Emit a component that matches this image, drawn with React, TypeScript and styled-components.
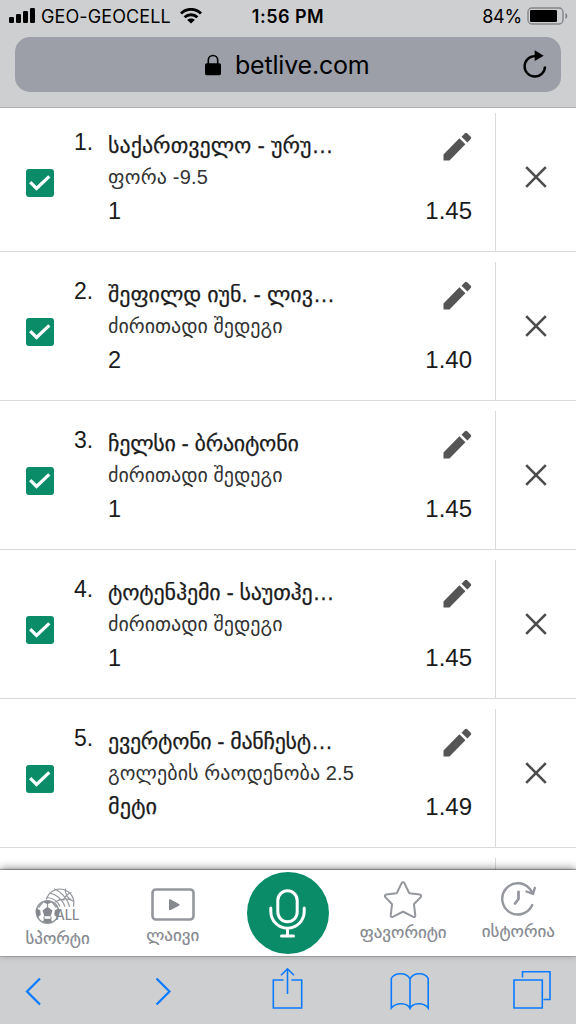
import React from "react";
import styled, { createGlobalStyle } from "styled-components";

const GlobalStyle = createGlobalStyle`
  * { box-sizing: border-box; }
  body { margin: 0; background: #fff; font-family: "Liberation Sans", "DejaVu Sans", sans-serif; }
  svg { display: block; flex: none; }
`;

const Screen = styled.div`
  width: 576px;
  height: 1024px;
  display: flex;
  flex-direction: column;
  overflow: hidden;
  color: #1b1b1b;
`;

const BrowserHeader = styled.header`
  height: 108px;
  flex: none;
  background: #cecfd1;
  border-bottom: 1px solid #b0b0b2;
  padding: 0 15px;
  color: #000;
`;

const StatusBar = styled.div`
  height: 37px;
  margin: 0 -6px;
  padding-bottom: 5px;
  display: grid;
  grid-template-columns: 1fr auto 1fr;
  align-items: center;
  font-family: Inter, sans-serif;
  font-size: 18px;
`;

const StatusGroup = styled.div<{ $end?: boolean }>`
  display: flex;
  align-items: center;
  gap: ${(p) => (p.$end ? 5 : 6)}px;
  justify-content: ${(p) => (p.$end ? "flex-end" : "flex-start")};
  margin-right: ${(p) => (p.$end ? -1 : 0)}px;
`;

const StatusText = styled.span<{ $spacing?: number; $bold?: boolean }>`
  letter-spacing: ${(p) => p.$spacing ?? 0}px;
  font-weight: ${(p) => (p.$bold ? 600 : 400)};
  white-space: nowrap;
`;

const WifiSlot = styled.div`
  margin-left: 3px;
`;

const AddressBar = styled.div`
  width: 546px;
  height: 55px;
  border-radius: 15px;
  background: #9c9ea8;
  display: flex;
  align-items: center;
  padding: 0 14px 0 190px;
`;

const Host = styled.span`
  margin-left: 14px;
  font-family: Inter, sans-serif;
  font-size: 25px;
  letter-spacing: -0.2px;
  flex: 1;
`;

const BetList = styled.main`
  flex: 1;
  min-height: 0;
  overflow: hidden;
`;

const BetRow = styled.article`
  height: 149px;
  padding-top: 10px;
  display: flex;
  border-bottom: 1px solid #dadada;
  &:first-child { height: 144px; padding-top: 5px; }
`;

const CheckCell = styled.div`
  width: 74px;
  padding: 56px 0 0 26px;
`;

const CheckBox = styled.div`
  width: 28px;
  height: 28px;
  border-radius: 3px;
  background: #0b8c69;
  display: grid;
  place-items: center;
`;

const Index = styled.div`
  width: 34px;
  padding-top: 16px;
  font-size: 23px;
  line-height: 26px;
`;

const BetInfo = styled.div`
  width: 260px;
  padding-top: 17px;
  white-space: nowrap;
`;

const Title = styled.div<{ $spacing: number }>`
  height: 32px;
  line-height: 31px;
  font-size: 22px;
  letter-spacing: ${(p) => p.$spacing}px;
  -webkit-text-stroke: 0.25px #1b1b1b;
`;

const Market = styled.div<{ $spacing: number }>`
  height: 30px;
  line-height: 30px;
  font-size: 20px;
  color: #333;
  letter-spacing: ${(p) => p.$spacing}px;
`;

const Pick = styled.div<{ $word: boolean }>`
  height: 38px;
  line-height: ${(p) => (p.$word ? 37 : 38)}px;
  font-size: ${(p) => (p.$word ? 22.3 : 23.5)}px;
  -webkit-text-stroke: ${(p) => (p.$word ? "0.25px #1b1b1b" : "0")};
`;

const OddsCell = styled.div`
  flex: 1;
  padding: 19px 23px 0 0;
  display: flex;
  flex-direction: column;
  align-items: flex-end;
`;

const Odds = styled.div`
  margin-top: 37px;
  font-size: 24px;
  line-height: 26px;
`;

const RemoveCell = styled.div`
  width: 81px;
  border-left: 1px solid #dadada;
  padding: 53px 0 0 29px;
`;

const BottomNav = styled.nav`
  position: relative;
  height: 86px;
  flex: none;
  background: #fff;
  box-shadow: 0 -1px 1px rgba(0, 0, 0, 0.3), 0 -2px 8px rgba(0, 0, 0, 0.42);
  display: grid;
  grid-template-columns: repeat(5, 115.2px);
  color: #85888f;
`;

const NavItem = styled.div<{ $top: number }>`
  padding-top: ${(p) => p.$top}px;
  display: flex;
  flex-direction: column;
  align-items: center;
`;

const NavLabel = styled.span`
  font-size: 17px;
  line-height: 22px;
  margin-top: 4px;
  white-space: nowrap;
  -webkit-text-stroke: 0.2px #85888f;
`;

const MicButton = styled.div`
  width: 82px;
  height: 82px;
  border-radius: 50%;
  background: #0b8c69;
  display: grid;
  place-items: center;
`;

const Toolbar = styled.footer`
  height: 68px;
  flex: none;
  background: #cecfd1;
  border-top: 1px solid #b0b0b2;
  padding: 10px 0 0 25px;
  display: grid;
  grid-template-columns: 130px 117px 118px 123px auto;
`;

const bets = [
  { title: "საქართველო - ურუ…", ts: 0, market: "ფორა -9.5", ms: 0.2, pick: "1", odds: "1.45" },
  { title: "შეფილდ იუნ. - ლივ…", ts: -0.05, market: "ძირითადი შედეგი", ms: 0, pick: "2", odds: "1.40" },
  { title: "ჩელსი - ბრაიტონი", ts: -0.25, market: "ძირითადი შედეგი", ms: 0, pick: "1", odds: "1.45" },
  { title: "ტოტენჰემი - საუთჰე…", ts: -0.17, market: "ძირითადი შედეგი", ms: 0, pick: "1", odds: "1.45" },
  { title: "ევერტონი - მანჩესტ…", ts: -0.28, market: "გოლების რაოდენობა 2.5", ms: 0.1, pick: "მეტი", odds: "1.49" },
];

const SignalIcon = () => (
  <svg width="26" height="16" viewBox="0 0 26 16">
    <rect x="0" y="9" width="5" height="6" rx="1.3" />
    <rect x="7" y="6" width="5" height="9" rx="1.3" />
    <rect x="14" y="3" width="5" height="12" rx="1.3" />
    <rect x="21" y="0" width="5" height="15" rx="1.3" />
  </svg>
);

const WifiIcon = () => (
  <svg width="22" height="16" viewBox="0 0 22 16" fill="none" stroke="#000" strokeWidth="2.9">
    <path d="M1 5.5C6.7 0 15.3 0 21 5.5" />
    <path d="M4.6 9.3c3.7-3.5 9.1-3.5 12.8 0" />
    <path d="M11 15.5 7.2 11.9c2.1-1.9 5.5-1.9 7.6 0z" fill="#000" stroke="none" />
  </svg>
);

const BatteryIcon = () => (
  <svg width="41" height="18" viewBox="0 0 41 18">
    <rect x="1" y="1" width="35" height="16" rx="4" fill="none" stroke="#85868a" strokeWidth="1.4" />
    <rect x="3" y="3" width="27" height="12" rx="1.2" />
    <path d="M38.4 6c2.6 1.2 2.6 4.8 0 6z" fill="#85868a" />
  </svg>
);

const LockIcon = () => (
  <svg width="16" height="22" viewBox="0 0 16 22">
    <path d="M3.3 10V6.2a4.7 4.7 0 0 1 9.4 0V10" fill="none" stroke="#000" strokeWidth="1.6" />
    <rect x="0" y="9.3" width="16" height="12" rx="1.7" />
  </svg>
);

const ReloadIcon = () => (
  <svg width="24" height="30" viewBox="0 0 24 30">
    <path d="M13 6.1h-1.2A10.2 10.2 0 1 0 22 16.4" fill="none" stroke="#000" strokeWidth="2.4" />
    <path d="M11.7 0.2v10.8l9-5.2z" />
  </svg>
);

const PencilIcon = () => (
  <svg width="29" height="29" viewBox="0 0 29 29" fill="#555">
    <path d="M.5 22.5v6h6L22.4 12.3l-6-6zM27.7 7.1a1.6 1.6 0 0 0 0-2.3l-3.5-3.5a1.6 1.6 0 0 0-2.3 0l-3.4 3.4 5.9 5.9z" />
  </svg>
);

const CloseIcon = () => (
  <svg width="22" height="22" viewBox="0 0 22 22" stroke="#4c4c4c" strokeWidth="2.6">
    <path d="m1.2 1.2 19.6 19.6M20.8 1.2 1.2 20.8" />
  </svg>
);

const SportsIcon = () => (
  <svg width="46" height="38" viewBox="0 0 46 38" fill="none" stroke="#94979d" strokeWidth="1.2">
    <path d="M11.4 13.5A13.9 13.9 0 1 1 38.4 20.5" />
    <path d="M14.5 7c6 1 13 6 15.500 13.500M12 11.500c6 .5 10.500 3.500 13 9M19 2.800c6 2.400 13.500 9 15.500 18M30.500 2.500c-1 5 2 10 7.500 12.500M36.500 6.500c-4.500 1.500-7 4.500-8 8M20 16c4.500-3 12-4.500 18.300-1" />
    <circle cx="12.500" cy="26" r="11.200" fill="#fff" strokeWidth="1.500" />
    <path d="m12.500 20.800 5 3.600-1.900 5.800H9.400l-1.900-5.800zM8 16l4.500 2.200L17 16c-2.500-1.400-6.500-1.400-9 0zM1.300 22l4 2.500.4 4.500-3 2.500a12 12 0 0 1-1.400-9.500zM23.700 22l-4 2.500-.4 4.500 3 2.500c1.400-2.600 1.800-6.200 1.400-9.500zM8 36l1-3.200h7L17 36c-2.600 1.400-6.400 1.400-9 0z" fill="#85888f" stroke="none" />
    <path d="M12.500 18v3M9.300 30.300 8.800 33M15.700 30.300l.5 2.700M8 16l-4.500 5.500M17 16l4.500 5.500" />
    <text x="20.500" y="33.500" textLength="24" lengthAdjust="spacingAndGlyphs" fontFamily="Inter, sans-serif" fontSize="14.500" fontWeight="500" fill="#85888f" stroke="none">ALL</text>
  </svg>
);

const LiveIcon = () => (
  <svg width="44" height="33" viewBox="0 0 44 33">
    <rect x="1.5" y="1.5" width="41" height="30" rx="3.5" fill="none" stroke="#94979d" strokeWidth="2.6" />
    <path d="M18 12.1v9.4c0 .7.6 1 1.2.7l8.8-4.5c.8-.5.8-1.2 0-1.6l-8.8-4.8c-.6-.3-1.2 0-1.2.8z" fill="#85888f" />
  </svg>
);

const MicIcon = () => (
  <svg width="37" height="49" viewBox="0 0 37 49" fill="none" stroke="#fff" strokeWidth="3" strokeLinecap="round">
    <rect x="8.8" y="1.8" width="19.4" height="31" rx="9.7" />
    <path d="M1.8 19v3.500a16.700 16.700 0 0 0 33.400 0V19M18.500 39.500v7M12.500 47h12" />
  </svg>
);

const StarIcon = () => (
  <svg width="38" height="37" viewBox="0 0 38 37" fill="none" stroke="#94979d" strokeWidth="2" strokeLinejoin="round">
    <path d="M17.6 2.1c.6-1.2 2.2-1.2 2.8 0l4.5 9.4c.2.4.5.6.9.7l10 1.4c1.3.2 1.8 1.6.9 2.5l-6.400 6.600c-.3.3-.4.6-.3 1l1.300 10.700c.2 1.300-1 2-2 1.400l-9.600-4.800c-.4-.2-.9-.2-1.300 0l-9.700 4.800c-1 .6-2.200-.2-2-1.400L8 23.700c.1-.4 0-.7-.3-1L1.300 16.100c-.9-.9-.4-2.300.9-2.500l10-1.400c.4-.1.7-.3.9-.7z" />
  </svg>
);

const HistoryIcon = () => (
  <svg width="36" height="36" viewBox="0 0 36 36" fill="none" stroke="#94979d" strokeWidth="2.4" strokeLinecap="round" strokeLinejoin="round">
    <path d="M32.200 24A15.600 15.600 0 1 1 29.500 7.500l3.300 5M26.500 10.500l6.500 2.500L34.800 6.800" />
    <path d="M18.500 11v7L15 22.500" strokeWidth="2.800" />
  </svg>
);

const BackIcon = () => (
  <svg width="17" height="50" viewBox="0 0 17 50" fill="none" stroke="#0a7aff" strokeWidth="2.2">
    <path d="M15 11.500 2 24.500l13 13" />
  </svg>
);
const ForwardIcon = () => (
  <svg width="17" height="50" viewBox="0 0 17 50" fill="none" stroke="#0a7aff" strokeWidth="2.2">
    <path d="m1.500 11.500 13 13-13 13" />
  </svg>
);
const ShareIcon = () => (
  <svg width="31" height="50" viewBox="0 0 31 50" fill="none" stroke="#0a7aff" strokeWidth="1.6">
    <path d="M11.500 13H1.300v28h28.400V13H19.300M15.500 27V2M9 8.300l6.500-6.500L22 8.300" />
  </svg>
);
const BookIcon = () => (
  <svg width="39" height="50" viewBox="0 0 39 50" fill="none" stroke="#0a7aff" strokeWidth="1.6">
    <path d="M20 12C16.500 4.500 4 5.500 1.300 11.500v29.500c5-6 16.200-5.500 18.700.5 2.500-6 13.700-6.500 18.200-.5V11.500C35.500 5.500 23.500 4.500 20 12v29.500" />
  </svg>
);
const TabsIcon = () => (
  <svg width="38" height="50" viewBox="0 0 38 50" fill="none" stroke="#0a7aff" strokeWidth="1.6">
    <path d="M1 13h28.300v28H1zM9.500 10.500V4.800H37v27.700h-6.500" />
  </svg>
);

export default function App() {
  return (
    <Screen>
      <GlobalStyle />
      <BrowserHeader>
        <StatusBar>
          <StatusGroup>
            <SignalIcon />
            <StatusText $spacing={0.1}>GEO-GEOCELL</StatusText>
            <WifiSlot>
              <WifiIcon />
            </WifiSlot>
          </StatusGroup>
          <StatusText $bold $spacing={0.5}>1:56 PM</StatusText>
          <StatusGroup $end>
            <StatusText $spacing={-0.2}>84%</StatusText>
            <BatteryIcon />
          </StatusGroup>
        </StatusBar>
        <AddressBar>
          <LockIcon />
          <Host>betlive.com</Host>
          <ReloadIcon />
        </AddressBar>
      </BrowserHeader>
      <BetList>
        {bets.map((bet, i) => (
          <BetRow key={bet.title}>
            <CheckCell>
              <CheckBox>
                <svg width="22" height="16" viewBox="0 0 22 16" fill="none" stroke="#fff" strokeWidth="3.2">
                  <path d="m1.200 7.200 6.300 6.300L20.300 1.300" />
                </svg>
              </CheckBox>
            </CheckCell>
            <Index>{i + 1}.</Index>
            <BetInfo>
              <Title $spacing={bet.ts}>{bet.title}</Title>
              <Market $spacing={bet.ms}>{bet.market}</Market>
              <Pick $word={bet.pick.length > 1}>{bet.pick}</Pick>
            </BetInfo>
            <OddsCell>
              <PencilIcon />
              <Odds>{bet.odds}</Odds>
            </OddsCell>
            <RemoveCell>
              <CloseIcon />
            </RemoveCell>
          </BetRow>
        ))}
        <BetRow>
          <CheckCell />
          <Index />
          <BetInfo />
          <OddsCell />
          <RemoveCell />
        </BetRow>
      </BetList>
      <BottomNav>
        <NavItem $top={16}>
          <SportsIcon />
          <NavLabel>სპორტი</NavLabel>
        </NavItem>
        <NavItem $top={18}>
          <LiveIcon />
          <NavLabel>ლაივი</NavLabel>
        </NavItem>
        <NavItem $top={2}>
          <MicButton>
            <MicIcon />
          </MicButton>
        </NavItem>
        <NavItem $top={11}>
          <StarIcon />
          <NavLabel>ფავორიტი</NavLabel>
        </NavItem>
        <NavItem $top={11}>
          <HistoryIcon />
          <NavLabel>ისტორია</NavLabel>
        </NavItem>
      </BottomNav>
      <Toolbar>
        <BackIcon />
        <ForwardIcon />
        <ShareIcon />
        <BookIcon />
        <TabsIcon />
      </Toolbar>
    </Screen>
  );
}
